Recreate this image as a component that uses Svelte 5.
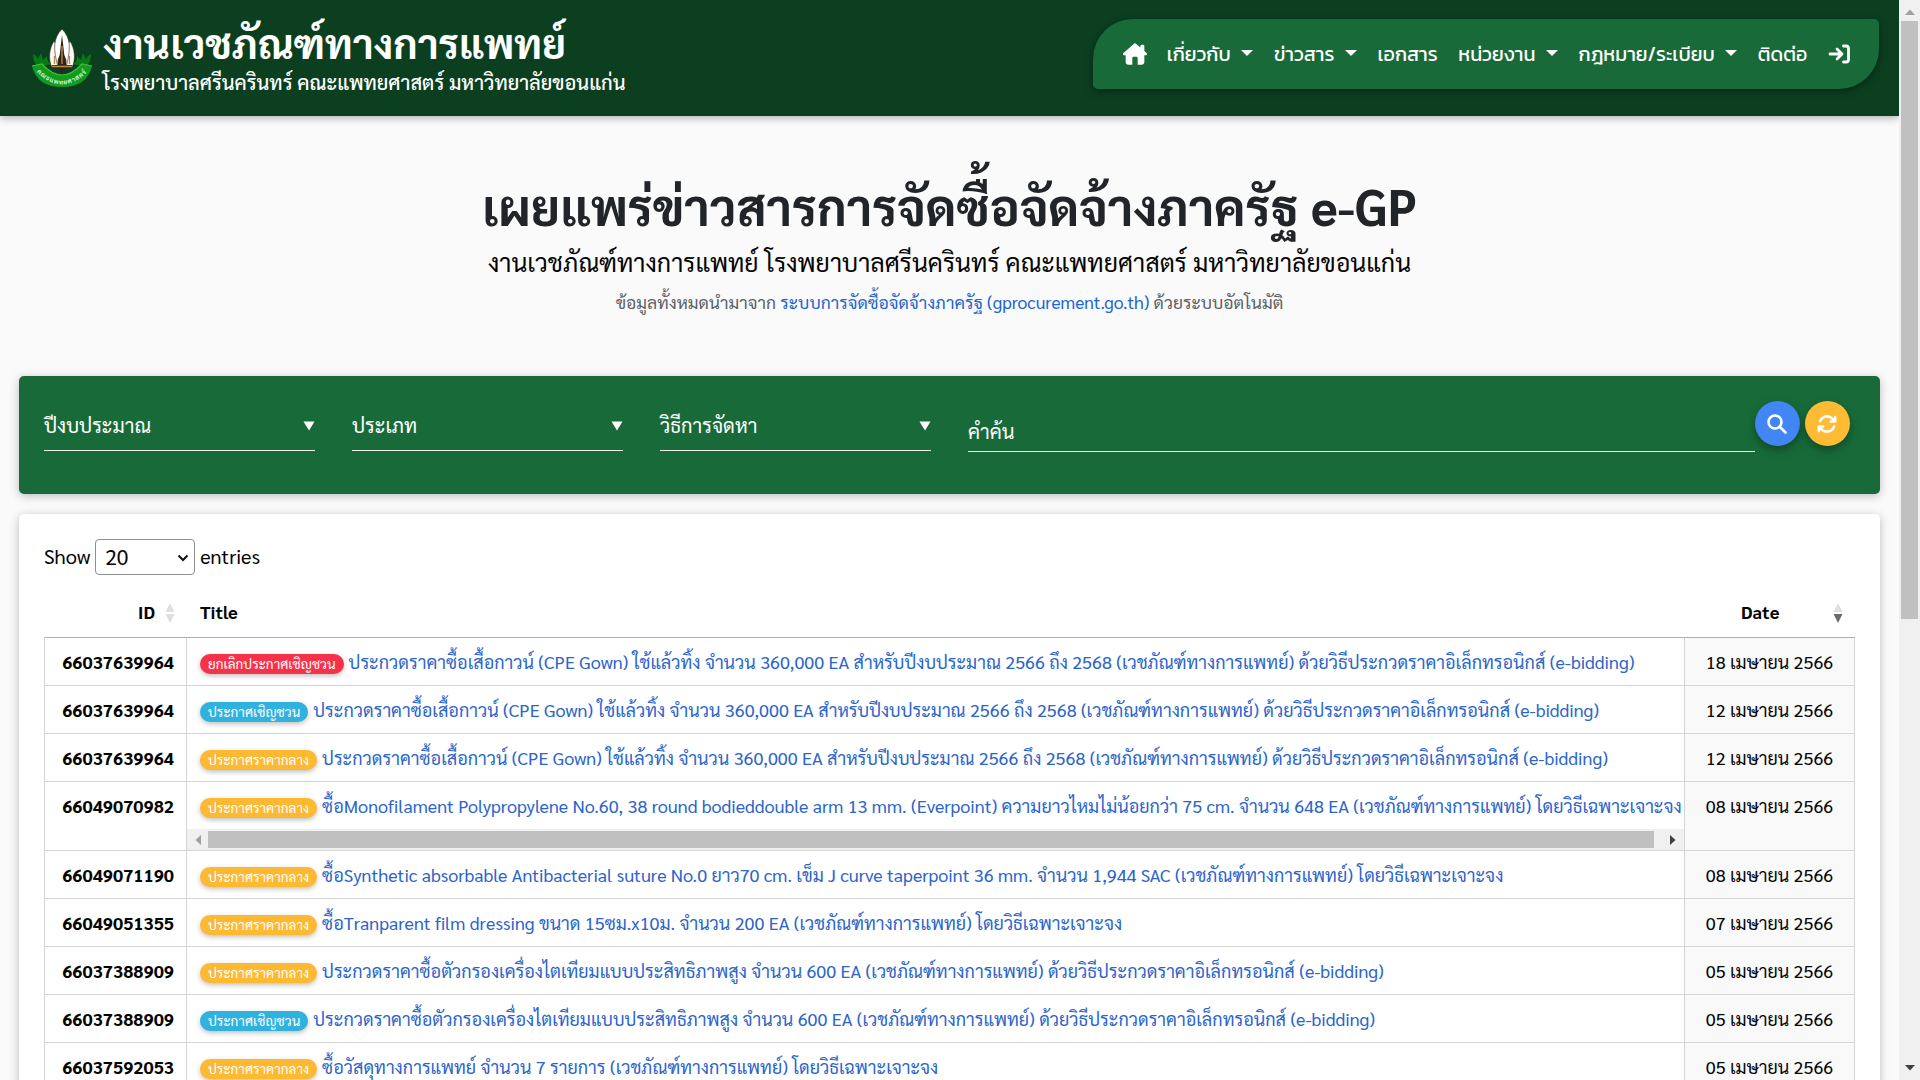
<script>
  const nav = [
    { label: 'เกี่ยวกับ', menu: true },
    { label: 'ข่าวสาร', menu: true },
    { label: 'เอกสาร', menu: false },
    { label: 'หน่วยงาน', menu: true },
    { label: 'กฎหมาย/ระเบียบ', menu: true },
    { label: 'ติดต่อ', menu: false },
  ];

  const filters = ['ปีงบประมาณ', 'ประเภท', 'วิธีการจัดหา'];

  const badges = {
    cancel: 'ยกเลิกประกาศเชิญชวน',
    invite: 'ประกาศเชิญชวน',
    price: 'ประกาศราคากลาง',
  };

  const gown =
    'ประกวดราคาซื้อเสื้อกาวน์ (CPE Gown) ใช้แล้วทิ้ง จำนวน 360,000 EA สำหรับปีงบประมาณ 2566 ถึง 2568 (เวชภัณฑ์ทางการแพทย์) ด้วยวิธีประกวดราคาอิเล็กทรอนิกส์ (e-bidding)';
  const filter =
    'ประกวดราคาซื้อตัวกรองเครื่องไตเทียมแบบประสิทธิภาพสูง จำนวน 600 EA (เวชภัณฑ์ทางการแพทย์) ด้วยวิธีประกวดราคาอิเล็กทรอนิกส์ (e-bidding)';

  const rows = [
    { id: '66037639964', kind: 'cancel', title: gown, date: '18 เมษายน 2566' },
    { id: '66037639964', kind: 'invite', title: gown, date: '12 เมษายน 2566' },
    { id: '66037639964', kind: 'price', title: gown, date: '12 เมษายน 2566' },
    {
      id: '66049070982',
      kind: 'price',
      title:
        'ซื้อMonofilament Polypropylene No.60, 38 round bodieddouble arm 13 mm. (Everpoint) ความยาวไหมไม่น้อยกว่า 75 cm. จำนวน 648 EA (เวชภัณฑ์ทางการแพทย์) โดยวิธีเฉพาะเจาะจง',
      date: '08 เมษายน 2566',
      scroll: true,
    },
    {
      id: '66049071190',
      kind: 'price',
      title:
        'ซื้อSynthetic absorbable Antibacterial suture No.0 ยาว70 cm. เข็ม J curve taperpoint 36 mm. จำนวน 1,944 SAC (เวชภัณฑ์ทางการแพทย์) โดยวิธีเฉพาะเจาะจง',
      date: '08 เมษายน 2566',
    },
    {
      id: '66049051355',
      kind: 'price',
      title: 'ซื้อTranparent film dressing ขนาด 15ซม.x10ม. จำนวน 200 EA (เวชภัณฑ์ทางการแพทย์) โดยวิธีเฉพาะเจาะจง',
      date: '07 เมษายน 2566',
    },
    { id: '66037388909', kind: 'price', title: filter, date: '05 เมษายน 2566' },
    { id: '66037388909', kind: 'invite', title: filter, date: '05 เมษายน 2566' },
    {
      id: '66037592053',
      kind: 'price',
      title: 'ซื้อวัสดุทางการแพทย์ จำนวน 7 รายการ (เวชภัณฑ์ทางการแพทย์) โดยวิธีเฉพาะเจาะจง',
      date: '05 เมษายน 2566',
    },
  ];
</script>

{#snippet sortIcon(desc)}
  <svg class="sort" viewBox="0 0 10 20" width="10" height="20">
    <path d="M5 0 9.5 9H.5z" fill="#dfdfdf" />
    <path d="M5 20 .5 11h9z" fill={desc ? '#6b6b6b' : '#dfdfdf'} />
  </svg>
{/snippet}

<div class="window">
  <div class="page">
    <header>
      <div class="brand">
        <svg class="logo" viewBox="0 0 62 60" width="62" height="60">
          <path d="M2 25c0 4 1 9 5 13l13-3c-3-2-4-4-4-8l-4 4-2-7-3 6-2-3zM60 25c0 4-1 9-5 13l-13-3c3-2 4-4 4-8l4 4 2-7 3 6 2-3z" fill="#087a14" />
          <path d="M1 37l10-2q20 22 40 0l10 2q-5 21-30 21T1 37z" fill="#129c1f" />
          <path d="M1 37l10-2q20 22 40 0l10 2" fill="none" stroke="#3cc139" stroke-width="1.2" />
          <path d="M23 12c-5 8-6 18-2 27h9V22zM39 12c5 8 6 18 2 27h-9V22z" fill="#fbf8f2" stroke="#2b2114" stroke-width=".6" />
          <path d="M31 0c-9 9-9 20-4 38h8c5-18 5-29-4-38z" fill="#fff" stroke="#2b2114" stroke-width=".6" />
          <path d="M31 6l1.300 11 1 9 2 5v5h6v3h-6l-4.300 5-4.300-5h-6v-3h6v-5l2-5 1-9z" fill="#33240f" />
          <path d="M23.500 27v8M38.500 27v8M31 17v18M21 37.500h20" stroke="#c08a48" stroke-width="1.300" />
          <path id="ribbon" d="M5.500 43Q31 68 56.500 43" fill="none" />
          <text class="ribbon"><textPath href="#ribbon" textLength="57">คณะแพทยศาสตร์</textPath></text>
        </svg>
        <div class="names">
          <div class="name">งานเวชภัณฑ์ทางการแพทย์</div>
          <div class="org">โรงพยาบาลศรีนครินทร์ คณะแพทยศาสตร์ มหาวิทยาลัยขอนแก่น</div>
        </div>
      </div>
      <nav>
        <svg class="home" viewBox="0 0 576 512" width="24" height="22">
          <path fill="#fff" d="M575.800 255.500c0 18-15 32.100-32 32.100h-32l.7 160.200c.2 35.500-28.500 64.300-64 64.300H352V352c0-18-14-32-32-32h-64c-18 0-32 14-32 32v160h-96.500c-35.300 0-64-28.700-64-64V287.600H32c-18 0-32-14-32-32.100 0-9 3-17 10-24L266.400 8c7-7 15-8 22-8s15 2 21 7L416 100V64c0-18 14-32 32-32h32c18 0 32 14 32 32v121l52 46.500c8 7 12 15 11.800 24z" />
        </svg>
        {#each nav as item}
          <a class="navitem" href="#top">{item.label}{#if item.menu}<i class="caret"></i>{/if}</a>
        {/each}
        <svg class="login" viewBox="0 0 22 20" width="22" height="20" fill="none" stroke="#fff" stroke-width="2.800" stroke-linecap="round" stroke-linejoin="round">
          <path d="M2 10h11M9 5l5 5-5 5M15.500 2H18a2.500 2.500 0 0 1 2.500 2.500v11A2.500 2.500 0 0 1 18 18h-2.500" />
        </svg>
      </nav>
    </header>

    <section class="hero">
      <h1>เผยแพร่ข่าวสารการจัดซื้อจัดจ้างภาครัฐ e-GP</h1>
      <p class="lead">งานเวชภัณฑ์ทางการแพทย์ โรงพยาบาลศรีนครินทร์ คณะแพทยศาสตร์ มหาวิทยาลัยขอนแก่น</p>
      <p class="note">ข้อมูลทั้งหมดนำมาจาก <a href="#egp">ระบบการจัดซื้อจัดจ้างภาครัฐ (gprocurement.go.th)</a> ด้วยระบบอัตโนมัติ</p>
    </section>

    <section class="filters">
      {#each filters as label}
        <div class="pick"><span>{label}</span><svg viewBox="0 0 12 10" width="12" height="10"><path d="M.5.5h11L6 9.500z" fill="#fff" /></svg></div>
      {/each}
      <div class="keyword">คำค้น</div>
      <button class="round search" aria-label="search">
        <svg viewBox="0 0 20 20" width="20" height="20" fill="none" stroke="#fff" stroke-width="2.600" stroke-linecap="round"><circle cx="8" cy="8" r="6.500" /><path d="M13 13l5.500 5.500" /></svg>
      </button>
      <button class="round refresh" aria-label="refresh">
        <svg viewBox="0 0 512 512" width="20" height="20" fill="#fff">
          <path d="M105 203c8-23 22-45 40-63 62-62 163-62 226 0l17 17h-36c-18 0-32 14-32 32s14 32 32 32h113c18 0 32-14 32-32V76c0-18-14-32-32-32s-32 14-32 32v35l-17-17c-88-87-229-87-317 0-24 25-42 54-53 85-6 17 3 35 20 41s35-3 39-17zM39 289c-13 2-24 15-24 31v113c0 18 14 32 32 32s32-14 32-32v-35l18 17c87 88 229 88 316 0 25-24 43-54 54-85 6-17-3-35-20-41s-35 3-41 20c-8 23-21 44-40 62-62 63-163 63-226 0l-17-17h36c18 0 32-14 32-32s-14-33-32-33H47z" />
        </svg>
      </button>
    </section>

    <section class="card">
      <div class="length">
        <span>Show</span>
        <span class="count">20<svg viewBox="0 0 12 8" width="12" height="8"><path d="M1.500 1.500L6 6l4.500-4.500" fill="none" stroke="#111" stroke-width="2" /></svg></span>
        <span>entries</span>
      </div>
      <div class="table">
        <div class="row head">
          <div class="id"><span>ID</span>{@render sortIcon(false)}</div>
          <div class="title">Title</div>
          <div class="date"><span>Date</span>{@render sortIcon(true)}</div>
        </div>
        {#each rows as row}
          <div class="row">
            <div class="id">{row.id}</div>
            <div class="title">
              <div class="line"><span class="badge {row.kind}">{badges[row.kind]}</span> <a href="#{row.id}">{row.title}</a></div>
              {#if row.scroll}
                <div class="hscroll">
                  <svg viewBox="0 0 6 10" width="6" height="10"><path d="M6 0v10L.5 5z" fill="#a0a0a0" /></svg>
                  <div class="hthumb"></div>
                  <svg viewBox="0 0 6 10" width="6" height="10"><path d="M0 0v10l5.500-5z" fill="#404040" /></svg>
                </div>
              {/if}
            </div>
            <div class="date">{row.date}</div>
          </div>
        {/each}
      </div>
    </section>
  </div>

  <div class="vscroll">
    <svg viewBox="0 0 10 6" width="10" height="6"><path d="M0 6h10L5 .5z" fill="#a0a0a0" /></svg>
    <div class="vthumb"></div>
    <svg class="down" viewBox="0 0 10 6" width="10" height="6"><path d="M0 0h10L5 5.500z" fill="#404040" /></svg>
  </div>
</div>

<style>
  :global(body) {
    overflow: hidden;
    background: #fafafa;
  }
  * {
    box-sizing: border-box;
  }
  .window {
    display: flex;
    width: 1920px;
    height: 1080px;
    overflow: hidden;
    font-family: Sarabun, 'Noto Sans', sans-serif;
    font-size: 18px;
    color: #050505;
  }
  .page {
    flex: none;
    width: 1899px;
    height: 1080px;
    overflow: hidden;
    background: #fafafa;
  }
  a {
    color: #2c65cb;
    text-decoration: none;
  }
  svg {
    display: block;
    flex: none;
  }

  header {
    display: flex;
    justify-content: space-between;
    height: 116px;
    padding: 19px 20px 0 31px;
    background: #0b3f20;
    box-shadow: 0 2px 8px rgba(0, 0, 0, 0.3);
    color: #fff;
  }
  .brand {
    display: flex;
    gap: 9px;
  }
  .logo {
    margin-top: 10px;
  }
  .ribbon {
    font-size: 6.5px;
    font-weight: 700;
    fill: #d9f5cf;
  }
  .name {
    height: 51px;
    margin-left: 1px;
    font-size: 40.9px;
    font-weight: 700;
    line-height: 46px;
    white-space: nowrap;
  }
  .org {
    margin-left: 0.5px;
    font-size: 20px;
    font-weight: 500;
    line-height: 24px;
    white-space: nowrap;
  }
  nav {
    display: flex;
    align-items: center;
    justify-content: space-between;
    width: 786px;
    height: 70px;
    padding: 0 29px 0 30px;
    border-radius: 40px 5px 40px 5px;
    background: #186b39;
    box-shadow: 0 2px 8px rgba(0, 0, 0, 0.4);
    font-family: Kanit, 'Noto Sans', sans-serif;
    font-size: 19.7px;
    font-weight: 400;
  }
  .home {
    margin-right: -1px;
  }
  .navitem {
    display: flex;
    align-items: center;
    color: #fff;
  }
  .caret {
    margin: -2px 0 0 10.5px;
    border: 6px solid transparent;
    border-top-color: #fff;
    border-bottom: 0;
  }

  .hero {
    height: 260px;
    padding-top: 52px;
    text-align: center;
    color: #212529;
  }
  h1,
  p {
    margin: 0;
    white-space: nowrap;
  }
  h1 {
    font-size: 50px;
    font-weight: 700;
    line-height: 76px;
  }
  .lead {
    font-size: 25px;
    line-height: 36px;
    color: #050505;
  }
  .note {
    margin-top: 8px;
    font-size: 17.5px;
    line-height: 28px;
    color: #5a6268;
  }
  .note a {
    color: #1b66d2;
  }

  .filters {
    display: flex;
    height: 118px;
    margin: 0 19px 20px 19px;
    padding: 25px 30px 0 25px;
    border-radius: 5px;
    background: #186b39;
    box-shadow: 0 2px 10px rgba(0, 0, 0, 0.25);
    color: #fff;
    font-size: 20px;
  }
  .pick {
    display: flex;
    align-items: center;
    justify-content: space-between;
    width: 271px;
    height: 50px;
    margin-right: 37px;
    border-bottom: 1px solid #e9f5ec;
  }
  .pick span {
    padding-bottom: 2px;
  }
  .keyword {
    flex: 1;
    height: 51px;
    padding-top: 11px;
    border-bottom: 1px solid #e9f5ec;
    line-height: 38px;
  }
  .round {
    display: grid;
    place-items: center;
    width: 45px;
    height: 45px;
    padding: 0;
    border: 0;
    border-radius: 50%;
    box-shadow: 0 4px 10px rgba(0, 0, 0, 0.35);
  }
  .search {
    background: #4285f4;
  }
  .refresh {
    margin-left: 5px;
    background: #ffbb33;
  }
  .round svg {
    margin-right: 1px;
  }

  .card {
    height: 600px;
    margin: 0 19px;
    padding: 25px 25px 0;
    border-radius: 5px;
    background: #fff;
    box-shadow: 0 2px 10px rgba(0, 0, 0, 0.25);
  }
  .length {
    display: flex;
    align-items: center;
    gap: 5px;
    height: 36px;
    font-size: 20px;
    line-height: 34px;
  }
  .length > span {
    height: 36px;
  }
  .count {
    display: flex;
    align-items: center;
    justify-content: space-between;
    width: 100px;
    padding: 0 5px 1px 9px;
    border: 1px solid #8f8f8f;
    border-radius: 4px;
    font-size: 21px;
  }
  .count svg {
    margin-top: 2px;
  }
  .row {
    display: grid;
    grid-template-columns: 141px 1498px 171px;
    border-bottom: 1px solid #d5d5d5;
    border-left: 1px solid #d5d5d5;
    line-height: 47px;
  }
  .head {
    height: 63px;
    padding-top: 14px;
    border-left-color: transparent;
    border-bottom-color: #b0b0b0;
    font-weight: 700;
    line-height: 46px;
  }
  .head span {
    padding-bottom: 2px;
  }
  .id {
    padding-right: 12px;
    font-weight: 700;
    text-align: right;
  }
  .head .id {
    display: flex;
    align-items: center;
    justify-content: flex-end;
    gap: 10px;
    padding-right: 11px;
  }
  .title {
    border-left: 1px solid #d5d5d5;
  }
  .line {
    display: flex;
    align-items: center;
    gap: 5px;
    height: 47px;
    padding-left: 13px;
    overflow: hidden;
    white-space: nowrap;
  }
  .head .title {
    padding-left: 13px;
    border-color: transparent;
  }
  .date {
    border-left: 1px solid #d5d5d5;
    border-right: 1px solid #d5d5d5;
    background: #f9f9f9;
    text-align: center;
  }
  .head .date {
    display: flex;
    align-items: center;
    justify-content: space-between;
    padding: 0 11px 0 56px;
    border-color: transparent;
    background: none;
  }
  .badge {
    height: 20px;
    margin-top: 5px;
    padding: 0 8px;
    border-radius: 10px;
    box-shadow: 0 2px 5px rgba(0, 0, 0, 0.25);
    color: #fff;
    font-size: 13.5px;
    line-height: 20px;
  }
  .cancel {
    background: #f5324a;
  }
  .invite {
    background: #30b1de;
  }
  .price {
    background: #fcb931;
  }
  .hscroll {
    display: flex;
    align-items: center;
    justify-content: space-between;
    height: 21px;
    padding: 0 8px;
    background: #f0f0f0;
  }
  .hthumb {
    width: 1446px;
    height: 17px;
    margin: 0 auto 0 7px;
    background: #c0c0c0;
  }

  .vscroll {
    display: flex;
    flex-direction: column;
    align-items: center;
    width: 21px;
    padding: 9px 0;
    background: #f0f0f0;
  }
  .vthumb {
    width: 17px;
    height: 598px;
    margin-top: 6px;
    background: #c0c0c0;
  }
  .down {
    margin-top: auto;
  }
</style>
